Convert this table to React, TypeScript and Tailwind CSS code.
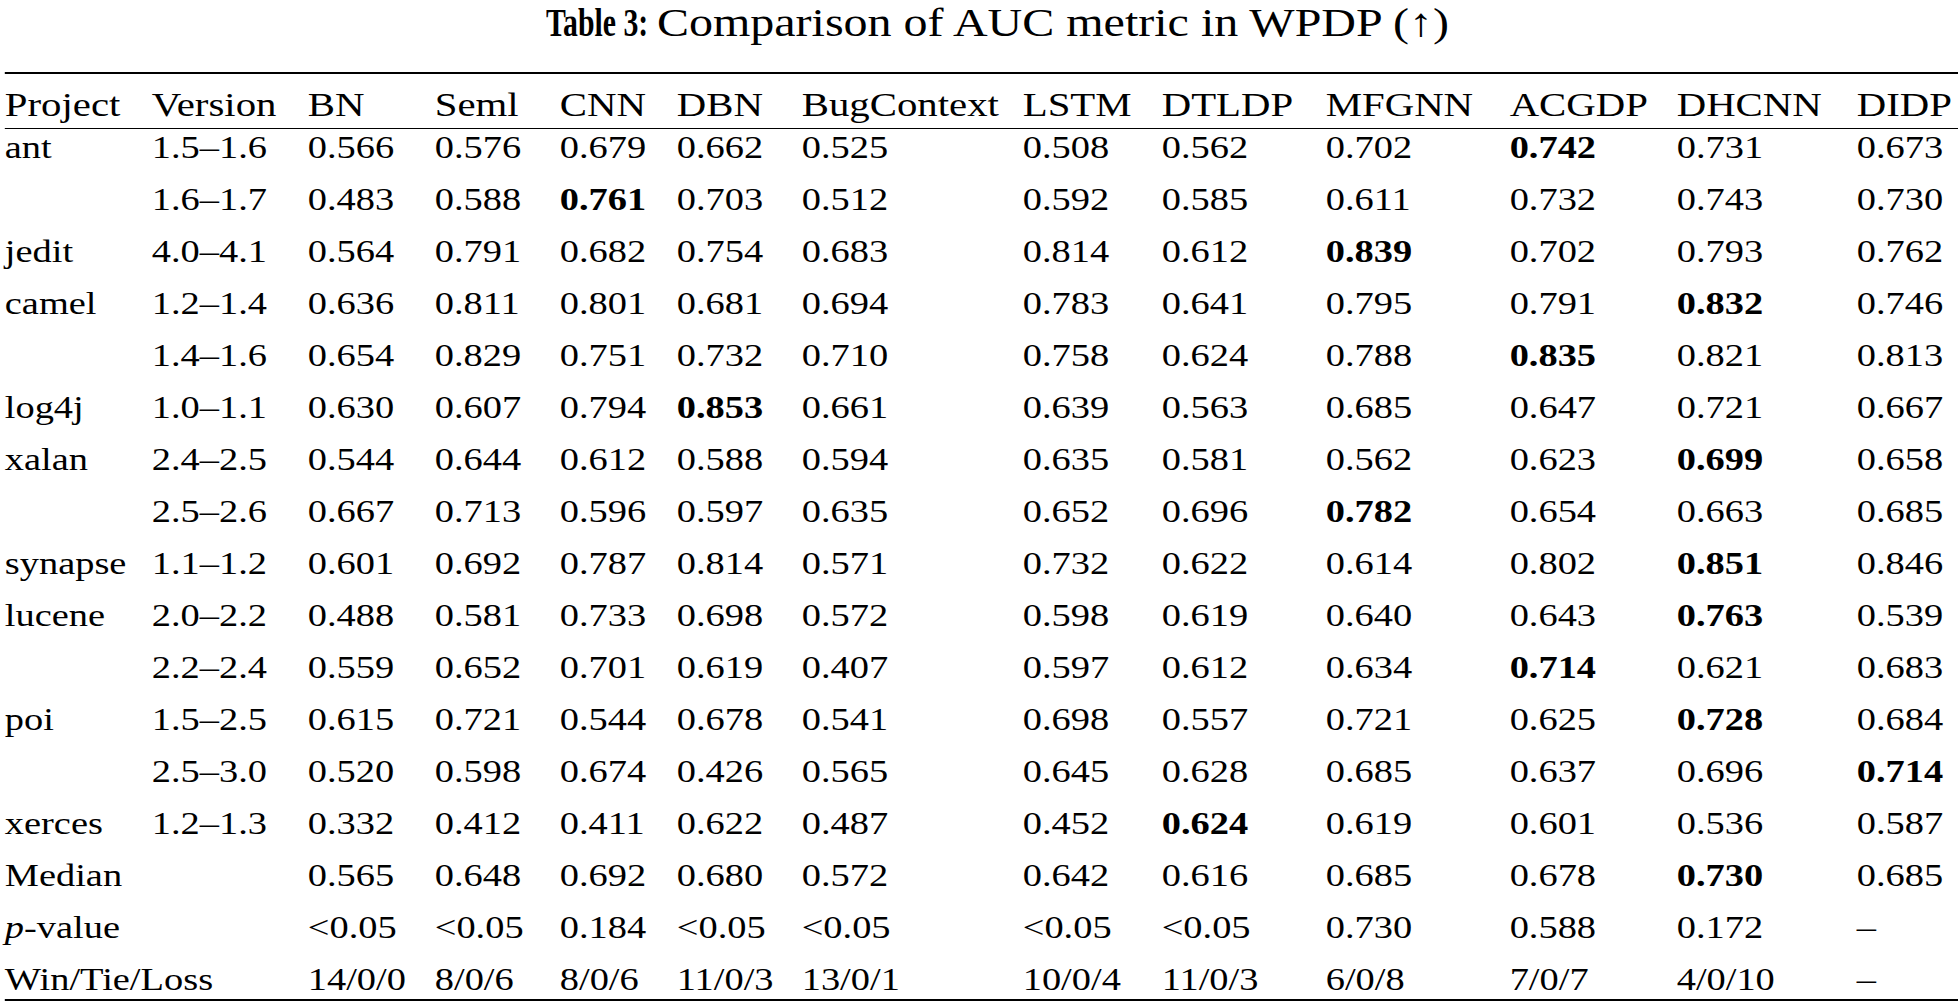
const columns = ['Project', 'Version', 'BN', 'Seml', 'CNN', 'DBN', 'BugContext', 'LSTM', 'DTLDP', 'MFGNN', 'ACGDP', 'DHCNN', 'DIDP'];

// "*" in front of a value marks the best score of the row (bold)
const rows: string[][] = [
  ['ant', '1.5–1.6', '0.566', '0.576', '0.679', '0.662', '0.525', '0.508', '0.562', '0.702', '*0.742', '0.731', '0.673'],
  ['', '1.6–1.7', '0.483', '0.588', '*0.761', '0.703', '0.512', '0.592', '0.585', '0.611', '0.732', '0.743', '0.730'],
  ['jedit', '4.0–4.1', '0.564', '0.791', '0.682', '0.754', '0.683', '0.814', '0.612', '*0.839', '0.702', '0.793', '0.762'],
  ['camel', '1.2–1.4', '0.636', '0.811', '0.801', '0.681', '0.694', '0.783', '0.641', '0.795', '0.791', '*0.832', '0.746'],
  ['', '1.4–1.6', '0.654', '0.829', '0.751', '0.732', '0.710', '0.758', '0.624', '0.788', '*0.835', '0.821', '0.813'],
  ['log4j', '1.0–1.1', '0.630', '0.607', '0.794', '*0.853', '0.661', '0.639', '0.563', '0.685', '0.647', '0.721', '0.667'],
  ['xalan', '2.4–2.5', '0.544', '0.644', '0.612', '0.588', '0.594', '0.635', '0.581', '0.562', '0.623', '*0.699', '0.658'],
  ['', '2.5–2.6', '0.667', '0.713', '0.596', '0.597', '0.635', '0.652', '0.696', '*0.782', '0.654', '0.663', '0.685'],
  ['synapse', '1.1–1.2', '0.601', '0.692', '0.787', '0.814', '0.571', '0.732', '0.622', '0.614', '0.802', '*0.851', '0.846'],
  ['lucene', '2.0–2.2', '0.488', '0.581', '0.733', '0.698', '0.572', '0.598', '0.619', '0.640', '0.643', '*0.763', '0.539'],
  ['', '2.2–2.4', '0.559', '0.652', '0.701', '0.619', '0.407', '0.597', '0.612', '0.634', '*0.714', '0.621', '0.683'],
  ['poi', '1.5–2.5', '0.615', '0.721', '0.544', '0.678', '0.541', '0.698', '0.557', '0.721', '0.625', '*0.728', '0.684'],
  ['', '2.5–3.0', '0.520', '0.598', '0.674', '0.426', '0.565', '0.645', '0.628', '0.685', '0.637', '0.696', '*0.714'],
  ['xerces', '1.2–1.3', '0.332', '0.412', '0.411', '0.622', '0.487', '0.452', '*0.624', '0.619', '0.601', '0.536', '0.587'],
  ['Median', '', '0.565', '0.648', '0.692', '0.680', '0.572', '0.642', '0.616', '0.685', '0.678', '*0.730', '0.685'],
  ['p-value', '', '<0.05', '<0.05', '0.184', '<0.05', '<0.05', '<0.05', '<0.05', '0.730', '0.588', '0.172', '–'],
  ['Win/Tie/Loss', '', '14/0/0', '8/0/6', '8/0/6', '11/0/3', '13/0/1', '10/0/4', '11/0/3', '6/0/8', '7/0/7', '4/0/10', '–'],
];

const gridCols =
  'grid grid-cols-[122.5px_130px_105.8px_104.2px_97.5px_104.1px_184.2px_115.8px_136.7px_153.3px_139.2px_150px_80.5px]';

function Cell({ value }: { value: string }) {
  if (value === 'p-value') {
    return (
      <div className="whitespace-nowrap">
        <i>p</i>-value
      </div>
    );
  }
  if (value.startsWith('*')) {
    return <div className="whitespace-nowrap font-bold">{value.slice(1)}</div>;
  }
  return <div className="whitespace-nowrap">{value}</div>;
}

export default function App() {
  return (
    <div className="min-h-screen bg-white overflow-hidden">
      {/* the source figure is stretched sideways, so the whole table is widened */}
      <div className="w-[1632px] origin-top-left scale-x-[1.2] font-['Liberation_Serif','Times_New_Roman',serif] text-black">
        {/* Caption */}
        <div className="h-[72px] pl-[455px] text-[40px] leading-[45px] whitespace-nowrap">
          <span className="inline-block origin-left scale-x-[0.62] font-bold mr-[-45px]">Table 3:</span>
          Comparison of AUC metric in WPDP (↑)
        </div>

        {/* Table */}
        <div className="ml-[4px] border-y-[2.5px] border-black text-[32px]">
          <div className={`${gridCols} h-[54.5px] pt-[12px] text-[34px] leading-[38px] border-b-[1.5px] border-black`}>
            {columns.map((c) => (
              <div key={c} className="whitespace-nowrap">
                {c}
              </div>
            ))}
          </div>

          {rows.map((row, i) => (
            <div key={i} className={`${gridCols} h-[52px] last:h-[38px] leading-[36px]`}>
              {row.map((v, j) => (
                <Cell key={j} value={v} />
              ))}
            </div>
          ))}
        </div>
      </div>
    </div>
  );
}
